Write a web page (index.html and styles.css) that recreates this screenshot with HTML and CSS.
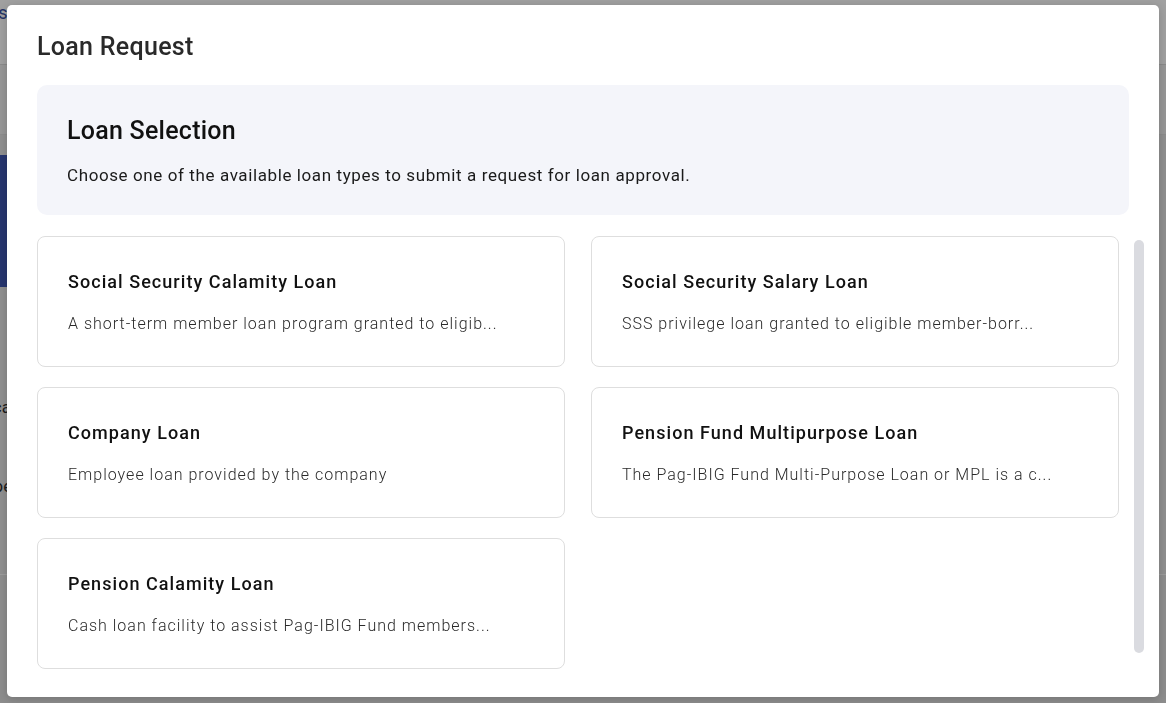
FILE: index.html
```html
<!DOCTYPE html>
<html lang="en">
<head>
<meta charset="utf-8">
<title>Loan Request</title>
<link rel="stylesheet" href="styles.css">
</head>
<body>
<div class="page">
  <div class="page-top"><span class="frag frag-top">Requests</span></div>
  <div class="page-band"></div>
  <div class="page-hero"></div>
  <div class="page-body">
    <div class="frag frag-ca">Loca</div>
    <div class="frag frag-e">Type</div>
  </div>
  <div class="page-foot"></div>
</div>

<div class="modal" role="dialog" aria-labelledby="modal-title">
  <h1 class="modal-title" id="modal-title">Loan Request</h1>
  <section class="intro">
    <h2 class="intro-title">Loan Selection</h2>
    <p class="intro-text">Choose one of the available loan types to submit a request for loan approval.</p>
  </section>
  <div class="list-row">
    <div class="cards">
      <div class="card">
        <h3 class="card-title">Social Security Calamity Loan</h3>
        <p class="card-text">A short-term member loan program granted to eligib...</p>
      </div>
      <div class="card">
        <h3 class="card-title">Social Security Salary Loan</h3>
        <p class="card-text">SSS privilege loan granted to eligible member-borr...</p>
      </div>
      <div class="card">
        <h3 class="card-title">Company Loan</h3>
        <p class="card-text">Employee loan provided by the company</p>
      </div>
      <div class="card">
        <h3 class="card-title">Pension Fund Multipurpose Loan</h3>
        <p class="card-text">The Pag-IBIG Fund Multi-Purpose Loan or MPL is a c...</p>
      </div>
      <div class="card">
        <h3 class="card-title">Pension Calamity Loan</h3>
        <p class="card-text">Cash loan facility to assist Pag-IBIG Fund members...</p>
      </div>
    </div>
    <div class="scroll-track"><div class="scroll-thumb"></div></div>
  </div>
</div>
</body>
</html>
```

FILE: styles.css
```css
* { box-sizing: border-box; }

html, body {
  margin: 0;
  padding: 0;
  height: 100%;
}

body {
  font-family: Roboto, "Liberation Sans", Arial, sans-serif;
  background: #8f8f8f;
  overflow: hidden;
}

/* dimmed underlying page */
.page {
  height: 100%;
  display: flex;
  flex-direction: column;
}
.page-top {
  height: 65px;
  background: #a0a0a0;
  border-bottom: 1px solid #8a8a8a;
  padding-top: 2px;
}
.page-band {
  height: 70px;
  background: #969696;
  border-bottom: 1px solid #8c8c8c;
}
.page-hero {
  margin-top: 20px;
  height: 132px;
  width: 40px;
  background: #27366f;
}
.page-body {
  flex: 0 0 288px;
  background: #8f8f8f;
  border-bottom: 1px solid #9c9c9c;
}
.page-foot {
  flex: 1;
  background: #8d8d8d;
}
.frag {
  font-size: 17px;
  color: #1c1c1c;
  white-space: nowrap;
}
.frag-top {
  display: block;
  color: #233266;
  margin-left: -52px;
  font-size: 18px;
}
.frag-ca { margin-left: -26px; margin-top: 110px; }
.frag-e { margin-left: -24px; margin-top: 59px; }

/* modal */
.modal {
  position: fixed;
  left: 7px;
  top: 5px;
  width: 1152px;
  height: 692px;
  background: #ffffff;
  border-radius: 5px;
  box-shadow: 0 2px 10px rgba(0, 0, 0, 0.18);
  padding: 0 30px;
  overflow: hidden;
}

.modal-title {
  margin: 0;
  padding-top: 27px;
  height: 80px;
  font-size: 25px;
  line-height: 30px;
  font-weight: 500;
  letter-spacing: 0.3px;
  color: #2a2a2a;
}

.intro {
  background: #f4f5fa;
  border-radius: 10px;
  height: 130px;
  padding: 30px 30px 0;
}
.intro-title {
  margin: 0;
  font-size: 25px;
  line-height: 32px;
  font-weight: 500;
  letter-spacing: 0.25px;
  color: #111111;
}
.intro-text {
  margin: 16px 0 0;
  font-size: 17px;
  line-height: 24px;
  font-weight: 400;
  letter-spacing: 0.6px;
  color: #1a1a1a;
}

.list-row {
  display: flex;
  gap: 15px;
  margin-top: 21px;
  margin-right: -15px;
}

.cards {
  flex: 1;
  display: grid;
  grid-template-columns: 1fr 1fr;
  column-gap: 26px;
  row-gap: 20px;
}

.card {
  height: 131px;
  border: 1px solid #dedede;
  border-radius: 8px;
  padding: 33px 30px 0;
}
.card-title {
  margin: 0;
  font-size: 18px;
  line-height: 24px;
  font-weight: 500;
  letter-spacing: 1.05px;
  color: #111111;
}
.card-text {
  margin: 18px 0 0;
  font-size: 16px;
  line-height: 24px;
  font-weight: 300;
  letter-spacing: 1px;
  color: #2a2a2a;
  white-space: nowrap;
}

.scroll-track {
  width: 10px;
  flex: 0 0 10px;
  padding-top: 4px;
}
.scroll-thumb {
  height: 413px;
  background: #dadbe0;
  border-radius: 5px;
}
```
